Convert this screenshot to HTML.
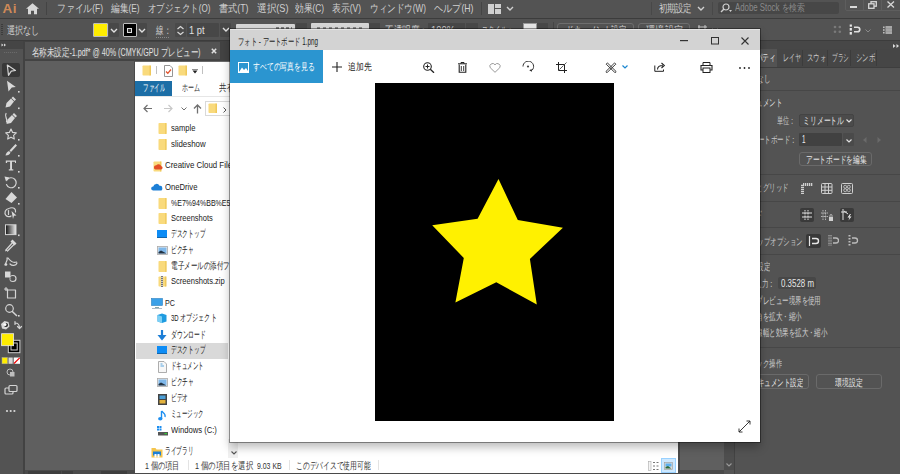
<!DOCTYPE html>
<html><head><meta charset="utf-8">
<style>
*{margin:0;padding:0;box-sizing:border-box}
html,body{width:900px;height:474px;overflow:hidden}
body{background:#535353;font-family:"Liberation Sans",sans-serif;position:relative;color:#ddd}
.a{position:absolute}
.t{position:absolute;white-space:nowrap;line-height:1;transform-origin:0 0}
</style></head><body>
<!-- menu bar -->
<div class="a" id="menubar" style="left:0;top:0;width:900px;height:18px;background:#535353">
  <div class="t" style="left:2.5px;top:1.6px;font-size:13.5px;font-weight:bold;color:#cf8a58;letter-spacing:0.6px">Ai</div>
  <svg class="a" style="left:26px;top:3px" width="13" height="11.5" viewBox="0 0 13 11"><path d="M6.5 0 L13 5.5 L11 5.5 L11 11 L8 11 L8 7.5 L5 7.5 L5 11 L2 11 L2 5.5 L0 5.5 Z" fill="#d8d8d8"/></svg>
  <div class="a" style="left:46px;top:2px;width:1px;height:13px;background:#444"></div>
  <div class="t" style="left:57px;top:3px;font-size:10.5px;color:#d0d0d0;--w:46px">ファイル(F)</div>
  <div class="t" style="left:111px;top:3px;font-size:10.5px;color:#d0d0d0;--w:28.5px">編集(E)</div>
  <div class="t" style="left:148px;top:3px;font-size:10.5px;color:#d0d0d0;--w:62.5px">オブジェクト(O)</div>
  <div class="t" style="left:219px;top:3px;font-size:10.5px;color:#d0d0d0;--w:29.5px">書式(T)</div>
  <div class="t" style="left:257px;top:3px;font-size:10.5px;color:#d0d0d0;--w:31.5px">選択(S)</div>
  <div class="t" style="left:295px;top:3px;font-size:10.5px;color:#d0d0d0;--w:29px">効果(C)</div>
  <div class="t" style="left:332px;top:3px;font-size:10.5px;color:#d0d0d0;--w:29px">表示(V)</div>
  <div class="t" style="left:370px;top:3px;font-size:10.5px;color:#d0d0d0;--w:56px">ウィンドウ(W)</div>
  <div class="t" style="left:434px;top:3px;font-size:10.5px;color:#d0d0d0;--w:39.5px">ヘルプ(H)</div>
  <div class="a" style="left:481px;top:2px;width:1px;height:13px;background:#444"></div>
  <svg class="a" style="left:488px;top:4px" width="13" height="10"><rect x="0" y="0" width="6" height="10" fill="#d0d0d0"/><rect x="7" y="0" width="6" height="4" fill="#d0d0d0"/><rect x="7" y="5" width="6" height="5" fill="#d0d0d0"/></svg>
  <svg class="a" style="left:506px;top:6px" width="8" height="6"><path d="M1 1 L4 4 L7 1" stroke="#d0d0d0" stroke-width="1.4" fill="none"/></svg>
  <div class="a" style="left:651px;top:2px;width:1px;height:13px;background:#484848"></div>
  <div class="t" style="left:659px;top:3px;font-size:10.5px;color:#cfcfcf;letter-spacing:-0.5px;--w:32px">初期設定</div>
  <svg class="a" style="left:697px;top:6px" width="8" height="6"><path d="M1 1 L4 4 L7 1" stroke="#d0d0d0" stroke-width="1.4" fill="none"/></svg>
  <div class="a" style="left:712px;top:2px;width:1px;height:13px;background:#484848"></div>
  <div class="a" style="left:718px;top:2px;width:121px;height:12px;background:#474747;border-radius:2px"></div>
  <svg class="a" style="left:720px;top:3px" width="12" height="10"><circle cx="6" cy="4" r="3" stroke="#cfcfcf" stroke-width="1.2" fill="none"/><path d="M4 6 L1 9" stroke="#cfcfcf" stroke-width="1.4"/><path d="M9 7 L12 7 L10.5 9 Z" fill="#cfcfcf"/></svg>
  <div class="t" style="left:735px;top:3px;font-size:10px;color:#8a8a8a;--w:70px">Adobe Stock を検索</div>
  <div class="a" style="left:845px;top:-2px;width:58px;height:13px;border:1px solid #5e5e5e;border-radius:2px"></div>
  <div class="a" style="left:863px;top:0;width:1px;height:10px;background:#5e5e5e"></div>
  <div class="a" style="left:881px;top:0;width:1px;height:10px;background:#5e5e5e"></div>
  <div class="a" style="left:850px;top:6px;width:7px;height:1.5px;background:#d8d8d8"></div>
  <svg class="a" style="left:868px;top:1px" width="9" height="8"><rect x="3" y="0.7" width="5.3" height="4.5" stroke="#d8d8d8" stroke-width="1.3" fill="#535353"/><rect x="0.7" y="2.8" width="5.3" height="4.5" stroke="#d8d8d8" stroke-width="1.3" fill="#535353"/></svg>
  <svg class="a" style="left:887px;top:1px" width="8" height="7"><path d="M0.5 0.5 L7 6.5 M7 0.5 L0.5 6.5" stroke="#d8d8d8" stroke-width="1.3"/></svg>
</div>
<div class="a" style="left:0;top:18px;width:900px;height:1px;background:#3c3c3c"></div>
<!-- control bar -->
<div class="a" id="ctrl" style="left:0;top:19px;width:900px;height:21px;background:#535353">
  <div class="a" style="left:1px;top:5px;width:2px;height:12px;background:repeating-linear-gradient(#3c3c3c 0 1px,transparent 1px 2px)"></div>
  <div class="t" style="left:7px;top:6.2px;font-size:10.5px;color:#d0d0d0;--w:32.5px">選択なし</div>
  <div class="a" style="left:93px;top:4px;width:15px;height:14px;border:1px solid #bdbdbd;border-radius:1px;background:#ffed00"></div>
  <div class="a" style="left:109px;top:4px;width:10px;height:14px;background:#484848;border-radius:1px"></div>
  <svg class="a" style="left:110px;top:9px" width="8" height="6"><path d="M1 1 L4 4 L7 1" stroke="#e0e0e0" stroke-width="1.4" fill="none"/></svg>
  <div class="a" style="left:123px;top:4px;width:13.5px;height:14px;border:1px solid #bdbdbd;border-radius:1px;background:#000"></div>
  <div class="a" style="left:127px;top:9px;width:5px;height:5px;background:#ddd"></div>
  <div class="a" style="left:128px;top:10px;width:3px;height:3px;background:#333"></div>
  <div class="a" style="left:137px;top:4px;width:10px;height:14px;background:#484848;border-radius:1px"></div>
  <svg class="a" style="left:138px;top:9px" width="8" height="6"><path d="M1 1 L4 4 L7 1" stroke="#e0e0e0" stroke-width="1.4" fill="none"/></svg>
  <div class="t" style="left:156px;top:6.2px;font-size:10.5px;color:#d0d0d0;--w:15px">線：</div>
  <div class="a" style="left:156px;top:18px;width:13px;height:0;border-top:1px dotted #888"></div>
  <div class="a" style="left:175px;top:4px;width:11px;height:14px;background:#4a4a4a;border-radius:1px"></div>
  <svg class="a" style="left:176px;top:6px" width="9" height="11"><path d="M1.5 4 L4.5 1.5 L7.5 4 M1.5 7 L4.5 9.5 L7.5 7" stroke="#d8d8d8" stroke-width="1.2" fill="none"/></svg>
  <div class="a" style="left:187px;top:4px;width:32px;height:14px;background:#474747;border-radius:1px"></div>
  <div class="t" style="left:189px;top:6.2px;font-size:10.5px;color:#e0e0e0;--w:15.5px">1 pt</div>
  <div class="a" style="left:220px;top:4px;width:11px;height:14px;background:#484848;border-radius:1px"></div>
  <svg class="a" style="left:222px;top:7.5px" width="8" height="6"><path d="M1 1 L4 4 L7 1" stroke="#e0e0e0" stroke-width="1.4" fill="none"/></svg>
  <!-- partially hidden items -->
  <div class="a" style="left:235.5px;top:4.5px;width:59.5px;height:14px;background:#d6d6d6;border-radius:1px"></div>
  <div class="a" style="left:276px;top:8px;width:16px;height:3px;background:repeating-linear-gradient(90deg,#555 0 3px,transparent 3px 5px);opacity:.7"></div>
  <div class="a" style="left:295.5px;top:4px;width:11.5px;height:14px;background:#484848"></div>
  <div class="a" style="left:311px;top:4px;width:58px;height:14px;background:#d6d6d6;border-radius:1px"></div>
  <div class="a" style="left:317px;top:8px;width:46px;height:3px;background:repeating-linear-gradient(90deg,#555 0 3px,transparent 3px 6px);opacity:.6"></div>
  <div class="a" style="left:369px;top:4px;width:11px;height:14px;background:#484848"></div>
  <div class="t" style="left:385px;top:6.2px;font-size:10.5px;color:#d0d0d0;--w:43px">不透明度：</div>
  <div class="a" style="left:428px;top:4px;width:37px;height:14px;background:#474747"></div>
  <div class="t" style="left:431px;top:6.2px;font-size:10.5px;color:#c8c8c8;--w:24px">100%</div>
  <div class="a" style="left:466px;top:4px;width:12px;height:14px;background:#484848"></div>
  <div class="t" style="left:482px;top:6.2px;font-size:10.5px;color:#d0d0d0;--w:31px">スタイル：</div>
  <div class="a" style="left:523px;top:4px;width:14px;height:14px;background:#e6e6e6;border:1px solid #999"></div>
  <div class="a" style="left:537px;top:4px;width:11px;height:14px;background:#484848"></div>
  <div class="a" style="left:553px;top:3px;width:1px;height:15px;background:#454545"></div>
  <div class="a" style="left:557px;top:4px;width:77px;height:15px;border:1px solid #6e6e6e;border-radius:3px"></div>
  <div class="t" style="left:566px;top:6.2px;font-size:10.5px;color:#d8d8d8;--w:60px">ドキュメント設定</div>
  <div class="a" style="left:638px;top:4px;width:52px;height:15px;border:1px solid #6e6e6e;border-radius:3px"></div>
  <div class="t" style="left:646px;top:6.2px;font-size:10.5px;color:#d8d8d8;--w:37px">環境設定</div>
  <svg class="a" style="left:696px;top:5px" width="13" height="11"><path d="M2 3 L11 3 M3 1 L3 9 L11 9 M9 1 L9 5" stroke="#c8c8c8" stroke-width="1" fill="none"/></svg>
  <svg class="a" style="left:712px;top:9px" width="6" height="4"><path d="M0.5 0.5 L3 3 L5.5 0.5" stroke="#aaa" stroke-width="1" fill="none"/></svg>
  <svg class="a" style="left:832px;top:5px" width="11" height="11"><g fill="#7a7a7a"><circle cx="3" cy="3" r="1.3"/><circle cx="7.8" cy="3" r="1.3"/><circle cx="3" cy="7.8" r="1.3"/><circle cx="7.8" cy="7.8" r="1.3"/></g></svg>
  <svg class="a" style="left:849px;top:5px" width="13" height="12"><g fill="#e8e8e8"><rect x="0.7" y="0.5" width="2.2" height="2.2"/><rect x="0.7" y="4" width="2.2" height="2.6"/><rect x="0.7" y="8" width="2.2" height="2.6"/></g><path d="M5 3.2 H8.5 a2.3 2.3 0 0 1 0 4.6 H5" stroke="#e0e0e0" stroke-width="1.6" fill="none"/></svg>
  <svg class="a" style="left:865px;top:9.5px" width="6" height="4"><path d="M0.5 0.5 L3 3 L5.5 0.5" stroke="#8a8a8a" stroke-width="1" fill="none"/></svg>
  <svg class="a" style="left:883px;top:7px" width="9" height="8"><g fill="#bdbdbd"><rect x="0" y="0.5" width="1.6" height="1.6"/><rect x="0" y="3.2" width="1.6" height="1.6"/><rect x="0" y="5.9" width="1.6" height="1.6"/><rect x="2.5" y="0" width="6.5" height="8" fill="#a8a8a8"/></g><path d="M2.5 2.6 H9 M2.5 5.3 H9" stroke="#8e8e8e" stroke-width="0.6"/></svg>
</div>
<div class="a" style="left:0;top:40px;width:900px;height:1px;background:#3c3c3c"></div>
<!-- left toolbar -->
<div class="a" style="left:0;top:41px;width:23px;height:433px;background:#535353"></div>
<div class="a" style="left:23px;top:41px;width:2px;height:433px;background:#424242"></div>
<div class="a" style="left:0;top:41px;width:23px;height:8px;background:#454545"></div>
<svg class="a" style="left:0;top:0" width="25" height="474">
  <g fill="#d8d8d8"><path d="M1.5 43.5 L3.5 45 L1.5 46.5Z M4 43.5 L6 45 L4 46.5Z"/></g>
  <path d="M4 52.5 h13" stroke="#6a6a6a" stroke-width="1" stroke-dasharray="1.2 .8"/>
  <rect x="2" y="63" width="18" height="14" rx="2" fill="#383838"/>
  <g stroke="#d4d4d4" fill="none" stroke-width="1.2" stroke-linejoin="round" stroke-linecap="round">
    <path d="M7.3 65 L15.5 70.5 L11.3 71.2 L8.5 75.3 Z"/>
    <!-- curvature pen -->
    <path d="M6 113.5 C4 117 8 118 6.5 122"/>
    <!-- star outline -->
    <path d="M11 129 L12.6 132.4 L16.3 132.9 L13.6 135.4 L14.3 139 L11 137.2 L7.7 139 L8.4 135.4 L5.7 132.9 L9.4 132.4 Z"/>
    <!-- rotate -->
    <path d="M7 180 A5 5 0 1 1 6.5 184.5"/>
    <!-- shape builder -->
    <path d="M10 208 C14 207 16 209 15.5 212 M9 208.5 C5 209 4 213 6 215.5 C7.5 217 10 217 11 216"/>
    <path d="M8.5 210.5 v4"/>
    <!-- eyedropper -->
    <path d="M6 250 L13 242 M7.5 251 L15 243.5"/>
    <!-- blend -->
    <path d="M5 265 C6 262 8 260 7 258 M8 258 C11 262 14 263 16.5 262 M10 264 C12 266 16 266 17 263"/>
    <!-- symbol sprayer circle -->
    <circle cx="13" cy="278.5" r="3"/>
    <!-- artboard -->
    <path d="M6 287.5 v3 M4.5 289 h3 M7.5 290 h8 v8 h-8 Z"/>
    <!-- zoom -->
    <circle cx="9.5" cy="308.5" r="3.8"/>
    <path d="M12.3 311.5 L16.5 315.5" stroke-width="1.6"/>
    <!-- swap -->
    <path d="M15 323 C18 323 19.5 325 19.5 328 M17.5 326.5 L19.5 328.5 L21.5 326.5 M15 321.5 v3"/>
    <!-- screen mode -->
    <rect x="5" y="388" width="8" height="6" rx="1"/>
    <rect x="9" y="385.5" width="8" height="6" rx="1" fill="#535353"/>
  </g>
  <g fill="#d8d8d8">
    <!-- direct selection -->
    <path d="M7 80.7 L15.8 87 L11.8 87.6 L8.5 91.6 Z"/>
    <!-- pen -->
    <path d="M13 96.5 L16 99.5 L14.5 101 L11.5 98 Z M11 98.5 L14 101.5 L10 106.5 L5.5 107.5 L6.5 103 Z"/>
    <path d="M10.5 105 C11.5 110 8 116 12 119 C8 116 11 110 10.5 105Z" opacity="0"/>
    <!-- curvature pen body -->
    <path d="M14 113 L17 116 L15.5 117.5 L12.5 114.5 Z M12 115 L15 118 L11 123 L6.5 124 L7.5 119.5 Z"/>
    <!-- brush -->
    <path d="M15.5 144 L17 145.5 L11 152 L9.5 150.5 Z M9 151 L10.5 152.5 C10 154.5 8 155.5 5.5 155.5 C6 153.5 7 151.5 9 151 Z"/>
    <!-- T -->
    <path d="M5.8 160.5 h10.2 v2.5 h-1 v-1.3 h-3 v7.6 h1.3 v1.3 h-4.5 v-1.3 h1.3 v-7.6 h-3 v1.3 h-1.3 Z"/>
    <!-- rotate arrow head -->
    <path d="M4.5 176.5 L9.5 177.5 L6 181.5 Z"/>
    <!-- eraser -->
    <path d="M11.5 192 L17 197.5 L11.5 203 L5.5 199 Z"/>
    <!-- shape builder cursor -->
    <path d="M11.5 211 L16.5 215.5 L14 215.8 L13 219 Z"/>
    <!-- eyedropper tip/body -->
    <path d="M12.5 239.5 L16.5 243.5 L14.5 245.5 L10.5 241.5 Z M5 251.5 L6 249 L7.5 250.5 Z"/>
    <!-- blend dot -->
    <circle cx="6" cy="264.5" r="1.3"/>
    <!-- symbol sprayer square -->
    <rect x="5" y="271.5" width="5.5" height="6"/>
    <!-- default fill/stroke -->
    <path d="M4.5 321 L8.5 322 L9.5 326.5 L6 329.5 L2 328.5 L1 324 Z"/>
    <!-- dots -->
    <circle cx="7" cy="411" r="1.1"/><circle cx="10.7" cy="411" r="1.1"/><circle cx="14.4" cy="411" r="1.1"/>
    <!-- small corner dots -->
    <rect x="18" y="91" width="1.6" height="1.6"/><rect x="18" y="107.5" width="1.6" height="1.6"/>
    <rect x="18" y="139" width="1.6" height="1.6"/><rect x="18" y="155" width="1.6" height="1.6"/>
    <rect x="18" y="171" width="1.6" height="1.6"/><rect x="18" y="187" width="1.6" height="1.6"/>
    <rect x="18" y="203" width="1.6" height="1.6"/><rect x="18" y="234.5" width="1.6" height="1.6"/>
    <rect x="18" y="315" width="1.6" height="1.6"/>
  </g>
  <g fill="#3a3a3a">
    <circle cx="12" cy="278.5" r="2" fill="none" stroke="#535353" stroke-width="0.6"/>
    <path d="M4 325 a2 2 0 1 0 4 0 a2 2 0 1 0 -4 0" fill="#222"/>
  </g>
  <circle cx="5" cy="324.5" r="1.5" fill="#fff"/>
  <!-- gradient square -->
  <defs><linearGradient id="tg" x1="0" x2="1"><stop offset="0" stop-color="#111"/><stop offset="1" stop-color="#eee"/></linearGradient></defs>
  <rect x="5.5" y="224.8" width="10.5" height="9.8" fill="url(#tg)" stroke="#d4d4d4" stroke-width="1"/>
  <!-- stroke swatch -->
  <rect x="8.3" y="340.3" width="11.6" height="12.4" fill="#000" stroke="#d0d0d0" stroke-width="1"/>
  <rect x="11" y="343" width="6.2" height="7" fill="none" stroke="#d0d0d0" stroke-width="1"/>
  <!-- fill swatch -->
  <rect x="1.6" y="333.7" width="12" height="12" fill="#ffed00" stroke="#e8e8e8" stroke-width="0.8"/>
  <!-- color/gradient/none -->
  <rect x="2" y="357.5" width="5.5" height="6.3" fill="#ffed00" stroke="#aaa" stroke-width="0.5"/>
  <rect x="8.5" y="357.5" width="4.2" height="6.3" fill="#d8d8d8"/>
  <rect x="13.7" y="357.5" width="6.3" height="6.3" fill="#fff"/>
  <path d="M14 363.5 L19.7 357.8" stroke="#e00" stroke-width="1.2"/>
  <!-- draw mode -->
  <circle cx="10" cy="372" r="3" fill="none" stroke="#bdbdbd" stroke-width="1"/>
  <rect x="10" y="372" width="4.5" height="4.5" fill="#bdbdbd"/>
</svg>
<!-- tab bar -->
<div class="a" style="left:25px;top:41px;width:710px;height:20px;background:#434343"></div>
<div class="a" style="left:25px;top:42px;width:195px;height:17px;background:#535353">
  <div class="t" style="left:7px;top:5px;font-size:10.5px;color:#e2e2e2;--w:168.5px">名称未設定-1.pdf* @ 40% (CMYK/GPU プレビュー)</div>
  <svg class="a" style="left:186px;top:5.5px" width="6" height="6"><path d="M0.8 0.8 L5.2 5.2 M5.2 0.8 L0.8 5.2" stroke="#e0e0e0" stroke-width="1.5"/></svg>
</div>
<!-- canvas -->
<div class="a" style="left:25px;top:61px;width:699px;height:413px;background:#5f5f5f"></div>
<!-- status bar -->
<div class="a" style="left:25px;top:470px;width:699px;height:4px;background:#4a4a4a"></div>
<div class="a" style="left:723.5px;top:470px;width:10.5px;height:4px;background:#555"></div>
<div class="a" style="left:28px;top:471px;width:33px;height:3px;background:#3e3e3e"></div>
<div class="a" style="left:62px;top:471px;width:11px;height:3px;background:#3e3e3e"></div>
<div class="a" style="left:101px;top:471px;width:26px;height:3px;background:#3e3e3e"></div>
<!-- scrollbar -->
<div class="a" style="left:723.5px;top:61px;width:10.5px;height:409px;background:#4e4e4e"></div>
<div class="a" style="left:734px;top:41px;width:1.5px;height:433px;background:#434343"></div>
<svg class="a" style="left:726px;top:462.5px" width="6" height="4"><path d="M0.5 0.5 L3 3 L5.5 0.5" stroke="#9a9a9a" stroke-width="1.1" fill="none"/></svg>
<!-- right panel -->
<div class="a" id="panel" style="left:735px;top:41px;width:165px;height:433px;background:#535353;overflow:hidden">
<div class="a" style="left:0.0px;top:0.0px;width:165.0px;height:7.5px;background:#474747"></div>
<svg class="a" style="left:157.5px;top:2.5px" width="7" height="4" viewBox="0 0 7 4"><path d="M0 0 L2.5 2 L0 4Z M3.5 0 L6 2 L3.5 4Z" fill="#ddd"/></svg>
<div class="a" style="left:0.0px;top:7.5px;width:165.0px;height:18.5px;background:#464646"></div>
<div class="a" style="left:0.0px;top:7.5px;width:42.0px;height:18.5px;background:#535353"></div>
<div class="t" style="left:7.0px;top:12.3px;font-size:10px;color:#e6e6e6;--w:34.0px">プロパティ</div>
<div class="a" style="left:67.0px;top:9.0px;width:0.8px;height:16.0px;background:#3c3c3c"></div>
<div class="a" style="left:92.0px;top:9.0px;width:0.8px;height:16.0px;background:#3c3c3c"></div>
<div class="a" style="left:114.5px;top:9.0px;width:0.8px;height:16.0px;background:#3c3c3c"></div>
<div class="a" style="left:141.0px;top:9.0px;width:0.8px;height:16.0px;background:#3c3c3c"></div>
<div class="t" style="left:48.2px;top:12.3px;font-size:10px;color:#c8c8c8;--w:17.8px">レイヤ</div>
<div class="t" style="left:71.6px;top:12.3px;font-size:10px;color:#c8c8c8;--w:19.4px">スウォ</div>
<div class="t" style="left:96.6px;top:12.3px;font-size:10px;color:#c8c8c8;--w:17px">ブラシ</div>
<div class="t" style="left:120.8px;top:12.3px;font-size:10px;color:#c8c8c8;--w:19.2px">シンボ</div>
<div class="a" style="left:0.0px;top:25.5px;width:165.0px;height:1.0px;background:#3e3e3e"></div>
<div class="t" style="left:8.5px;top:33.3px;font-size:10px;color:#d6d6d6;--w:26.0px">選択なし</div>
<div class="a" style="left:0.0px;top:48.5px;width:165.0px;height:1.0px;background:#474747"></div>
<div class="t" style="left:8.4px;top:56.8px;font-size:10px;color:#dedede;--w:39.0px">ドキュメント</div>
<div class="t" style="left:41.8px;top:75.4px;font-size:10px;color:#c8c8c8;--w:18.5px">単位：</div>
<div class="a" style="left:64.3px;top:72.9px;width:54.7px;height:12.9px;background:#4b4b4b;border:1px solid #444;border-radius:2px"></div>
<div class="t" style="left:68.4px;top:74.8px;font-size:10px;color:#e6e6e6;--w:41px">ミリメートル</div>
<svg class="a" style="left:110.5px;top:77.5px" width="6" height="4" viewBox="0 0 6 4"><path d="M0.5 0.5 L3 3 L5.5 0.5" stroke="#e0e0e0" stroke-width="1.2" fill="none"/></svg>
<div class="t" style="left:15.5px;top:93.9px;font-size:10px;color:#c8c8c8;--w:45.5px">アートボード：</div>
<div class="a" style="left:64.3px;top:92.2px;width:42.7px;height:12.9px;background:#414141;border-radius:1px"></div>
<div class="t" style="left:67.0px;top:93.9px;font-size:10px;color:#f0f0f0;--w:3.5px">1</div>
<div class="a" style="left:107.8px;top:92.2px;width:11.2px;height:12.9px;background:#4a4a4a;border-radius:1px"></div>
<svg class="a" style="left:110.5px;top:97.5px" width="6" height="4" viewBox="0 0 6 4"><path d="M0.5 0.5 L3 3 L5.5 0.5" stroke="#e0e0e0" stroke-width="1.2" fill="none"/></svg>
<svg class="a" style="left:127.8px;top:96.0px" width="4" height="6" viewBox="0 0 4 6"><path d="M3.5 0 L0 3 L3.5 6Z" fill="#6a6a6a"/></svg>
<svg class="a" style="left:141.8px;top:96.0px" width="4" height="6" viewBox="0 0 4 6"><path d="M0.5 0 L4 3 L0.5 6Z" fill="#6a6a6a"/></svg>
<div class="a" style="left:64.3px;top:110.7px;width:72.5px;height:14.3px;border:1px solid #6a6a6a;border-radius:3px"></div>
<div class="t" style="left:70.8px;top:114.1px;font-size:10px;color:#e6e6e6;--w:60.4px">アートボードを編集</div>
<div class="a" style="left:0.0px;top:133.0px;width:165.0px;height:1.0px;background:#474747"></div>
<div class="t" style="left:-4.7px;top:142.4px;font-size:10px;color:#c8c8c8;--w:58.5px">ルーラーとグリッド</div>
<svg class="a" style="left:66.0px;top:142.0px" width="12" height="11" viewBox="0 0 12 11"><path d="M1.5 11 V1.5 H12" stroke="#d0d0d0" stroke-width="3" fill="none" stroke-dasharray="1.3 0.7"/></svg>
<svg class="a" style="left:86.0px;top:142.0px" width="11.5" height="11" viewBox="0 0 11.5 11"><rect x="0.5" y="0.5" width="10.5" height="10" rx="1" fill="none" stroke="#cfcfcf" stroke-width="1"/><path d="M4 1 V10.5 M7.5 1 V10.5 M1 4 H11 M1 7.3 H11" stroke="#cfcfcf" stroke-width="1"/></svg>
<svg class="a" style="left:105.5px;top:142.0px" width="12" height="11" viewBox="0 0 12 11"><rect x="0.5" y="0.5" width="11" height="10" rx="1" fill="none" stroke="#cfcfcf" stroke-width="1"/><circle cx="4.2" cy="3.8" r="1.5" fill="none" stroke="#cfcfcf" stroke-width="0.8"/><circle cx="7.8" cy="3.8" r="1.5" fill="none" stroke="#cfcfcf" stroke-width="0.8"/><circle cx="4.2" cy="7.2" r="1.5" fill="none" stroke="#cfcfcf" stroke-width="0.8"/><circle cx="7.8" cy="7.2" r="1.5" fill="none" stroke="#cfcfcf" stroke-width="0.8"/></svg>
<div class="a" style="left:0.0px;top:159.5px;width:165.0px;height:1.0px;background:#474747"></div>
<div class="t" style="left:7.5px;top:169.0px;font-size:10px;color:#c8c8c8;--w:19.5px">ガイド</div>
<div class="a" style="left:65.0px;top:166.5px;width:14.0px;height:14.5px;background:#3a3a3a;border-radius:2px"></div>
<svg class="a" style="left:67.0px;top:168.5px" width="10" height="10" viewBox="0 0 10 10"><path d="M3 0 V10 M6 0 V10" stroke="#e0e0e0" stroke-width="1" stroke-dasharray="1 0.5"/><path d="M0 3 H10 M0 7 H10" stroke="#e0e0e0" stroke-width="1.2"/></svg>
<svg class="a" style="left:86.0px;top:168.5px" width="12" height="12" viewBox="0 0 12 12"><path d="M2 0 V10 M4.5 0 V10 M0 3 H7 M0 6.5 H7" stroke="#bdbdbd" stroke-width="0.9" stroke-dasharray="1 0.5"/><rect x="8" y="7" width="4" height="4" fill="#d0d0d0"/><path d="M9 7 V5.5 a1 1 0 0 1 2 0 V7" stroke="#d0d0d0" fill="none" stroke-width="0.8"/></svg>
<div class="a" style="left:104.6px;top:166.5px;width:14.0px;height:14.5px;background:#3a3a3a;border-radius:2px"></div>
<svg class="a" style="left:106.0px;top:168.0px" width="12" height="12" viewBox="0 0 12 12"><path d="M2 0 V11 M0 3 H6" stroke="#e0e0e0" stroke-width="1"/><path d="M3 2 L7 5" stroke="#e0e0e0" stroke-width="1"/><path d="M9 5 L6.5 8.5 H8.5 L7.5 11.5 L10.5 7.5 H8.5 L10 5Z" fill="#f0f0f0"/></svg>
<div class="a" style="left:0.0px;top:186.2px;width:165.0px;height:1.0px;background:#474747"></div>
<div class="t" style="left:9.0px;top:196.0px;font-size:10px;color:#c8c8c8;--w:58.5px">スナップオプション</div>
<div class="a" style="left:71.2px;top:193.1px;width:14.5px;height:14.0px;background:#383838;border-radius:2px"></div>
<svg class="a" style="left:73.0px;top:195.0px" width="12" height="10" viewBox="0 0 12 10"><path d="M1.5 0 V10" stroke="#e6e6e6" stroke-width="1.2"/><path d="M4 2.5 H8 a2.5 2.5 0 0 1 0 5 H4" stroke="#e6e6e6" stroke-width="1.4" fill="none"/></svg>
<svg class="a" style="left:93.3px;top:194.0px" width="11" height="11" viewBox="0 0 11 11"><path d="M1 0 V11 M3 0 V11" stroke="#bdbdbd" stroke-width="1" stroke-dasharray="1 0.6"/><path d="M5 3 H8 a2.5 2.5 0 0 1 0 5 H5" stroke="#bdbdbd" stroke-width="1.3" fill="none"/></svg>
<svg class="a" style="left:113.1px;top:194.0px" width="11" height="11" viewBox="0 0 11 11"><path d="M1.5 0 V11" stroke="#bdbdbd" stroke-width="2" stroke-dasharray="1.5 1.5"/><path d="M4 3 H7 a2.5 2.5 0 0 1 0 5 H4" stroke="#bdbdbd" stroke-width="1.3" fill="none"/></svg>
<div class="a" style="left:0.0px;top:212.5px;width:165.0px;height:1.0px;background:#474747"></div>
<div class="t" style="left:8.5px;top:221.0px;font-size:10px;color:#c8c8c8;--w:26.0px">環境設定</div>
<div class="t" style="left:6.8px;top:237.9px;font-size:10px;color:#c8c8c8;--w:32.5px">キー入力：</div>
<div class="a" style="left:42.6px;top:236.2px;width:38.4px;height:12.1px;background:#474747;border-radius:2px"></div>
<div class="t" style="left:45.8px;top:237.7px;font-size:10px;color:#e6e6e6;--w:33px">0.3528 m</div>
<div class="t" style="left:21.1px;top:254.8px;font-size:10px;color:#d0d0d0;--w:65.0px">プレビュー境界を使用</div>
<div class="t" style="left:20.5px;top:270.9px;font-size:10px;color:#d0d0d0;--w:45.5px">角を拡大・縮小</div>
<div class="t" style="left:21.1px;top:287.0px;font-size:10px;color:#d0d0d0;--w:71.5px">線幅と効果を拡大・縮小</div>
<div class="a" style="left:0.0px;top:306.0px;width:165.0px;height:1.0px;background:#474747"></div>
<div class="t" style="left:8.4px;top:318.0px;font-size:10px;color:#c8c8c8;--w:39.0px">クイック操作</div>
<div class="a" style="left:7.0px;top:333.2px;width:67.0px;height:14.5px;border:1px solid #6a6a6a;border-radius:3px"></div>
<div class="t" style="left:15.5px;top:336.5px;font-size:10px;color:#e6e6e6;--w:52.0px">ドキュメント設定</div>
<div class="a" style="left:80.5px;top:333.2px;width:66.5px;height:14.5px;border:1px solid #6a6a6a;border-radius:3px"></div>
<div class="t" style="left:99.8px;top:336.5px;font-size:10px;color:#e6e6e6;--w:27.4px">環境設定</div>
</div>

<!-- explorer -->
<div class="a" id="explorer" style="left:135px;top:61px;width:544px;height:412px;background:#fff;overflow:hidden">
<div class="a" style="left:0;top:0;width:544px;height:1px;background:#6a6a6a"></div>
<svg class="a" style="left:6.599999999999994px;top:3.5999999999999943px" width="10" height="12"><rect x="0.5" y="0.5" width="8.0" height="10.0" rx="0.8" fill="#f9da7c"/><rect x="7.5" y="0.5" width="1.5" height="10.0" fill="#efc85a"/></svg>
<div class="a" style="left:21px;top:5px;width:1px;height:8px;background:#c0c0c0"></div>
<svg class="a" style="left:29px;top:4px" width="9" height="12"><path d="M0.5 0.5 h5.5 l2.5 2.5 v8.5 h-8 Z" fill="#fff" stroke="#8a8a8a" stroke-width="0.9"/><path d="M2 6.5 L3.8 8.3 L7 4.5" stroke="#e2522b" stroke-width="1.3" fill="none"/></svg>
<svg class="a" style="left:42.900000000000006px;top:4px" width="10" height="12"><rect x="0.5" y="0.5" width="8.0" height="10.0" rx="0.8" fill="#f9da7c"/><rect x="7.5" y="0.5" width="1.5" height="10.0" fill="#efc85a"/></svg>
<svg class="a" style="left:56.5px;top:8px" width="6" height="5"><path d="M0 0 h6" stroke="#222" stroke-width="1"/><path d="M0.5 1.5 h5 l-2.5 3 Z" fill="#222"/></svg>
<div class="a" style="left:67px;top:5px;width:1px;height:8px;background:#c0c0c0"></div>
<div class="a" style="left:0;top:19.7px;width:37px;height:15px;background:#1c6ea6"></div>
<div class="a" style="left:0;top:35px;width:544px;height:1px;background:#e6e6e6"></div>
<svg class="a" style="left:8px;top:43px" width="10" height="9"><path d="M9 4.5 H1 M4.5 1 L1 4.5 L4.5 8" stroke="#707070" stroke-width="1.2" fill="none"/></svg>
<svg class="a" style="left:28px;top:43px" width="10" height="9"><path d="M1 4.5 H9 M5.5 1 L9 4.5 L5.5 8" stroke="#c8c8c8" stroke-width="1.2" fill="none"/></svg>
<svg class="a" style="left:46px;top:46px" width="6" height="4"><path d="M0.5 0.5 L3 3 L5.5 0.5" stroke="#707070" stroke-width="1" fill="none"/></svg>
<svg class="a" style="left:57.5px;top:43px" width="9" height="10"><path d="M4.5 9.5 V1 M1 4.5 L4.5 1 L8 4.5" stroke="#707070" stroke-width="1.3" fill="none"/></svg>
<div class="a" style="left:70px;top:40px;width:120px;height:15px;border:1px solid #d9d9d9;background:#fff"></div>
<svg class="a" style="left:73.4px;top:41.5px" width="10" height="11.5"><rect x="0.5" y="0.5" width="8.0" height="9.5" rx="0.8" fill="#f9da7c"/><rect x="7.5" y="0.5" width="1.5" height="9.5" fill="#efc85a"/></svg>
<svg class="a" style="left:87.5px;top:46px" width="4" height="6"><path d="M0.5 0.5 L3 3 L0.5 5.5" stroke="#555" stroke-width="1" fill="none"/></svg>
<div class="a" style="left:1.3px;top:282.3px;width:92px;height:15.7px;background:#d9d9d9"></div>
<svg class="a" style="left:23px;top:62.2px" width="9.5" height="12.5"><rect x="0.5" y="0" width="8" height="11" rx="0.8" fill="#f9da7c"/><rect x="7.0" y="0" width="1.5" height="11" fill="#f0cc62"/></svg>
<svg class="a" style="left:23px;top:77.89999999999998px" width="9.5" height="12.5"><rect x="0.5" y="0" width="8" height="11" rx="0.8" fill="#f9da7c"/><rect x="7.0" y="0" width="1.5" height="11" fill="#f0cc62"/></svg>
<svg class="a" style="left:23px;top:136.7px" width="9.5" height="12.5"><rect x="0.5" y="0" width="8" height="11" rx="0.8" fill="#f9da7c"/><rect x="7.0" y="0" width="1.5" height="11" fill="#f0cc62"/></svg>
<svg class="a" style="left:23px;top:151.89999999999998px" width="9.5" height="12.5"><rect x="0.5" y="0" width="8" height="11" rx="0.8" fill="#f9da7c"/><rect x="7.0" y="0" width="1.5" height="11" fill="#f0cc62"/></svg>
<svg class="a" style="left:23px;top:200.0px" width="9.5" height="12.5"><rect x="0.5" y="0" width="8" height="11" rx="0.8" fill="#f9da7c"/><rect x="7.0" y="0" width="1.5" height="11" fill="#f0cc62"/></svg>
<svg class="a" style="left:17.5px;top:99.5px" width="9.5" height="12"><rect x="0.5" y="0.5" width="7.5" height="10.0" rx="0.8" fill="#f9da7c"/><rect x="7.0" y="0.5" width="1.5" height="10.0" fill="#efc85a"/></svg>
<svg class="a" style="left:19px;top:102.5px" width="9" height="6"><path d="M1.5 5.5 a2.2 2.2 0 0 1 0.8 -4.3 a3 3 0 0 1 5 1 a1.7 1.7 0 0 1 0 3.3 Z" fill="#e34f26"/></svg>
<svg class="a" style="left:16px;top:122px" width="12" height="8"><path d="M2 7.5 a2 2 0 0 1 0.3 -4 a3.3 3.3 0 0 1 6.2 -0.8 a2.4 2.4 0 0 1 2.8 2.4 a2.2 2.2 0 0 1 -0.8 2.4 Z" fill="#1c7fd6"/></svg>
<div class="a" style="left:22px;top:169.1px;width:10px;height:8px;background:#0d8cf5;border-bottom:1px solid #1565a8"></div>
<div class="a" style="left:22px;top:284.9px;width:10px;height:8px;background:#0d8cf5;border-bottom:1px solid #1565a8"></div>
<svg class="a" style="left:21.5px;top:185.1px" width="11" height="9"><rect x="0.5" y="0.5" width="10" height="8" fill="#eee" stroke="#aaa" stroke-width="0.8"/><rect x="1.5" y="1.5" width="8" height="6" fill="#7fb8ea"/><path d="M1.5 6 L4 4.5 L9.5 7.5 H1.5 Z" fill="#234"/></svg>
<svg class="a" style="left:21.5px;top:317.1px" width="11" height="9"><rect x="0.5" y="0.5" width="10" height="8" fill="#eee" stroke="#aaa" stroke-width="0.8"/><rect x="1.5" y="1.5" width="8" height="6" fill="#7fb8ea"/><path d="M1.5 6 L4 4.5 L9.5 7.5 H1.5 Z" fill="#234"/></svg>
<svg class="a" style="left:23px;top:215px" width="9.5" height="12"><rect x="0.5" y="0.5" width="7.5" height="10.0" rx="0.8" fill="#f9da7c"/><rect x="7.0" y="0.5" width="1.5" height="10.0" fill="#efc85a"/></svg>
<div class="a" style="left:26px;top:215px;width:2px;height:11px;background:repeating-linear-gradient(#777 0 1px,#ccc 1px 2px)"></div>
<svg class="a" style="left:16px;top:237px" width="12" height="11"><rect x="0.5" y="0.5" width="11" height="7" fill="#3aa0e8" stroke="#2a7fc0" stroke-width="0.6"/><path d="M4 9.5 h4" stroke="#8aa" stroke-width="1"/><path d="M1 10.5 h10" stroke="#9ab" stroke-width="0.8"/></svg>
<svg class="a" style="left:22px;top:252px" width="10" height="10"><path d="M0.5 2 L5 0.5 L9.5 2 V8.5 L5 10 L0.5 8.5 Z" fill="#1e9be0"/><path d="M0.5 2 L5 3.5 V10 L0.5 8.5 Z" fill="#7dd0f5"/></svg>
<svg class="a" style="left:22px;top:268.5px" width="10" height="11"><path d="M5 0 V9" stroke="#1c7ed6" stroke-width="2.2"/><path d="M0.5 5 L5 10.5 L9.5 5 Z" fill="#1c7ed6"/></svg>
<svg class="a" style="left:22.5px;top:300px" width="9" height="12"><path d="M0.5 0.5 h5.5 l2.5 2.5 v8.5 h-8 Z" fill="#f7f7f7" stroke="#999" stroke-width="0.8"/><path d="M2.5 3 h2 M2.5 5 h3.5" stroke="#5aa7e0" stroke-width="1"/></svg>
<svg class="a" style="left:23px;top:333px" width="9" height="11"><rect x="0" y="0" width="9" height="11" fill="#444"/><rect x="1.5" y="1.5" width="6" height="3.5" fill="#4b9fd8"/><rect x="1.5" y="6" width="6" height="3.5" fill="#e3b23c"/></svg>
<svg class="a" style="left:23px;top:348.5px" width="9" height="11"><path d="M3.5 1 V8.5" stroke="#1c8ef0" stroke-width="1.4"/><ellipse cx="2.3" cy="8.8" rx="2.2" ry="1.8" fill="#1c8ef0"/><path d="M3.5 1 C5 3 8 3.5 7 7" stroke="#1c8ef0" stroke-width="1.3" fill="none"/></svg>
<svg class="a" style="left:21.5px;top:364.5px" width="11" height="10"><rect x="0" y="0" width="2" height="2" fill="#1c8ef0"/><rect x="2.5" y="0" width="2" height="2" fill="#1c8ef0"/><rect x="0" y="2.5" width="2" height="2" fill="#1c8ef0"/><rect x="2.5" y="2.5" width="2" height="2" fill="#1c8ef0"/><rect x="1" y="6" width="10" height="3.5" fill="#555"/><rect x="7.5" y="7" width="2.5" height="1.2" fill="#3c3"/></svg>
<svg class="a" style="left:16px;top:385.5px" width="12" height="11"><path d="M0.5 1 h4 l1 1.5 h6 v8 h-11 Z" fill="#f4c44c"/><rect x="2" y="4.5" width="8" height="4" fill="#1c7fd6"/><rect x="3.5" y="7" width="2" height="3.5" fill="#fff"/><rect x="6.5" y="7" width="2" height="3.5" fill="#fff"/></svg>
<div class="a" style="left:53px;top:399px;width:1px;height:10px;background:#e3e3e3"></div>
<div class="a" style="left:154px;top:399px;width:1px;height:10px;background:#e3e3e3"></div>
<div class="a" style="left:242.5px;top:399px;width:1px;height:10px;background:#e3e3e3"></div>
<div class="a" style="left:93px;top:378px;width:10px;height:19px;background:#f0f0f0"></div>
<svg class="a" style="left:95.5px;top:389.5px" width="6" height="4"><path d="M0.5 0.5 L3 3 L5.5 0.5" stroke="#555" stroke-width="1.1" fill="none"/></svg>
<svg class="a" style="left:513px;top:399.5px" width="12" height="10"><rect x="0.5" y="0.5" width="2.5" height="9" fill="#f4f4f4" stroke="#aaa" stroke-width="0.6"/><path d="M5 1.5 h2 M8.5 1.5 h2 M5 5 h2 M8.5 5 h2 M5 8.5 h2 M8.5 8.5 h2" stroke="#777" stroke-width="1"/></svg>
<div class="a" style="left:526px;top:397px;width:15px;height:15px;background:#cce8ff;border:1px solid #99d1ff"></div>
<svg class="a" style="left:529px;top:400.5px" width="9" height="8"><rect x="0.5" y="0.5" width="8" height="7" fill="#ddd" stroke="#999" stroke-width="0.6"/><rect x="1.5" y="1.5" width="6" height="3" fill="#5ab0f0"/><path d="M1.5 5 L4 4 L7.5 6.5 H1.5Z" fill="#2a6a3a"/></svg>
<div class="t" style="left:8px;top:22.0px;font-size:10px;color:#ffffff;--w:22px">ファイル</div>
<div class="t" style="left:47px;top:22.0px;font-size:10px;color:#333;--w:18px">ホーム</div>
<div class="t" style="left:83.80000000000001px;top:22.0px;font-size:10px;color:#333;--w:15px">共有</div>
<div class="t" style="left:35.69999999999999px;top:62.1px;font-size:9.8px;color:#1a1a1a;--w:24.4px">sample</div>
<div class="t" style="left:35.599999999999994px;top:77.8px;font-size:9.8px;color:#1a1a1a;--w:34.7px">slideshow</div>
<div class="t" style="left:30px;top:99.4px;font-size:9.8px;color:#1a1a1a;--w:71px">Creative Cloud Files</div>
<div class="t" style="left:30px;top:120.6px;font-size:9.8px;color:#1a1a1a;--w:32.4px">OneDrive</div>
<div class="t" style="left:35.599999999999994px;top:136.6px;font-size:9.8px;color:#1a1a1a;--w:88px">%E7%94%BB%E5%83%8F</div>
<div class="t" style="left:35.599999999999994px;top:151.8px;font-size:9.8px;color:#1a1a1a;--w:41.8px">Screenshots</div>
<div class="t" style="left:35.599999999999994px;top:168.2px;font-size:9.8px;color:#1a1a1a;--w:34.2px">デスクトップ</div>
<div class="t" style="left:35.599999999999994px;top:184.2px;font-size:9.8px;color:#1a1a1a;--w:22.8px">ピクチャ</div>
<div class="t" style="left:35.599999999999994px;top:199.9px;font-size:9.8px;color:#1a1a1a;--w:78px">電子メールの添付ファイル</div>
<div class="t" style="left:35.599999999999994px;top:215.1px;font-size:9.8px;color:#1a1a1a;--w:53.7px">Screenshots.zip</div>
<div class="t" style="left:30px;top:236.9px;font-size:9.8px;color:#1a1a1a;--w:9.9px">PC</div>
<div class="t" style="left:35.599999999999994px;top:252.3px;font-size:9.8px;color:#1a1a1a;--w:45.6px">3D オブジェクト</div>
<div class="t" style="left:35.599999999999994px;top:268.6px;font-size:9.8px;color:#1a1a1a;--w:34.9px">ダウンロード</div>
<div class="t" style="left:35.599999999999994px;top:284.0px;font-size:9.8px;color:#1a1a1a;--w:34.2px">デスクトップ</div>
<div class="t" style="left:35.599999999999994px;top:300.2px;font-size:9.8px;color:#1a1a1a;--w:32.9px">ドキュメント</div>
<div class="t" style="left:35.599999999999994px;top:316.2px;font-size:9.8px;color:#1a1a1a;--w:22.8px">ピクチャ</div>
<div class="t" style="left:35.599999999999994px;top:332.2px;font-size:9.8px;color:#1a1a1a;--w:17.2px">ビデオ</div>
<div class="t" style="left:35.599999999999994px;top:348.1px;font-size:9.8px;color:#1a1a1a;--w:32.7px">ミュージック</div>
<div class="t" style="left:35.80000000000001px;top:364.3px;font-size:9.8px;color:#1a1a1a;--w:45.9px">Windows (C:)</div>
<div class="t" style="left:30px;top:385.3px;font-size:9.8px;color:#1a1a1a;--w:28.3px">ライブラリ</div>
<div class="t" style="left:10.300000000000011px;top:399.9px;font-size:9.8px;color:#333;--w:34.7px">1 個の項目</div>
<div class="t" style="left:60.30000000000001px;top:399.9px;font-size:9.8px;color:#333;--w:58px">1 個の項目を選択</div>
<div class="t" style="left:122.19999999999999px;top:399.9px;font-size:9.8px;color:#333;--w:24.6px">9.03 KB</div>
<div class="t" style="left:161.2px;top:399.9px;font-size:9.8px;color:#333;--w:74.5px">このデバイスで使用可能</div>
</div>
<div class="a" style="left:133.5px;top:60px;width:1.5px;height:414px;background:#4a4a4a"></div>
<div class="a" style="left:678px;top:60px;width:1.5px;height:414px;background:#4a4a4a"></div>
<div class="a" style="left:133.5px;top:473px;width:546px;height:1px;background:#4a4a4a"></div>

<!-- photos window -->
<div class="a" id="photos" style="left:230px;top:29px;width:530px;height:413px;background:#fff;box-shadow:0 0 0 1px rgba(0,0,0,.38),0 5px 9px rgba(0,0,0,.28)">
<div class="a" style="left:0;top:0;width:530px;height:21.3px;background:#d3d3d3;border-top:1px solid #e4e4e4"></div>
<div class="t" style="left:7.8px;top:8.0px;font-size:10px;color:#222;--w:80px">フォト - アートボード 1.png</div>
<svg class="a" style="left:450.0px;top:11.0px" width="8" height="1.5" viewBox="0 0 8 1.5"><rect width="8" height="1.2" fill="#333"/></svg>
<svg class="a" style="left:480.5px;top:8.0px" width="8" height="7.5" viewBox="0 0 8 7.5"><rect x="0.5" y="0.5" width="7" height="6.5" fill="none" stroke="#333" stroke-width="1"/></svg>
<svg class="a" style="left:511.0px;top:7.5px" width="8" height="8" viewBox="0 0 8 8"><path d="M0.5 0.5 L7.5 7.5 M7.5 0.5 L0.5 7.5" stroke="#333" stroke-width="1.1"/></svg>
<div class="a" style="left:0;top:21px;width:93px;height:33px;background:#2b95d0"></div>
<svg class="a" style="left:7.8px;top:32.5px" width="11" height="11" viewBox="0 0 11 11"><rect x="0.5" y="0.5" width="10" height="10" fill="none" stroke="#fff" stroke-width="1"/><path d="M1 10 L4 5.5 L6 8 L8 6 L10 9 V10 Z" fill="#fff"/></svg>
<div class="t" style="left:23.3px;top:33.3px;font-size:10px;color:#ffffff;--w:61.7px">すべての写真を見る</div>
<svg class="a" style="left:102.0px;top:32.5px" width="10" height="10" viewBox="0 0 10 10"><path d="M5 0 V10 M0 5 H10" stroke="#222" stroke-width="1.1"/></svg>
<div class="t" style="left:117.8px;top:33.3px;font-size:10px;color:#222;--w:23.3px">追加先</div>
<svg class="a" style="left:193.0px;top:33.0px" width="12" height="11" viewBox="0 0 12 11"><circle cx="4.5" cy="4.5" r="3.8" fill="none" stroke="#222" stroke-width="1.1"/><path d="M4.5 2.5 V6.5 M2.5 4.5 H6.5" stroke="#222" stroke-width="1"/><path d="M7.3 7.3 L11 10.8" stroke="#222" stroke-width="1.3"/></svg>
<svg class="a" style="left:227.5px;top:33.0px" width="9" height="11" viewBox="0 0 9 11"><path d="M0 1.8 H9 M3 1.8 V0.5 H6 V1.8" stroke="#222" stroke-width="1" fill="none"/><path d="M1.2 2.5 V10.3 H7.8 V2.5" stroke="#222" stroke-width="1.1" fill="none"/><path d="M3.3 4 V9 M5.7 4 V9" stroke="#222" stroke-width="0.9"/></svg>
<svg class="a" style="left:259.0px;top:33.5px" width="12" height="10" viewBox="0 0 12 10"><path d="M6 9.3 L1.3 4.8 A2.6 2.6 0 0 1 6 1.8 A2.6 2.6 0 0 1 10.7 4.8 Z" fill="none" stroke="#9a9a9a" stroke-width="1"/></svg>
<svg class="a" style="left:291.5px;top:32px" width="13" height="13" viewBox="0 0 13 13"><path d="M1 5.5 A5.3 5.3 0 1 1 9.2 9.9" fill="none" stroke="#333" stroke-width="1"/><path d="M7.3 9.3 L9.8 10.8 L9.6 8 Z" fill="#222"/><circle cx="6" cy="5.5" r="1.1" fill="#444"/></svg>
<svg class="a" style="left:326px;top:32.5px" width="11" height="11" viewBox="0 0 11 11"><path d="M2.5 0 V8.5 H11 M0 2.5 H8.5 V11" fill="none" stroke="#222" stroke-width="1"/><path d="M3.5 7.5 L7.5 3.5 M8.5 2.5 L10.5 0.5" stroke="#333" stroke-width="0.8"/></svg>
<svg class="a" style="left:374.5px;top:32.5px" width="12" height="11" viewBox="0 0 12 11"><g fill="none" stroke="#2a2a2a" stroke-width="0.9" stroke-linejoin="round"><path d="M1.2 2.2 L2.4 0.9 L11 9.4 L10.6 10.5 L9.5 10.2 Z"/><path d="M10.8 2.2 L9.6 0.9 L1 9.4 L1.4 10.5 L2.5 10.2 Z"/></g></svg>
<svg class="a" style="left:392.0px;top:35.5px" width="6" height="4" viewBox="0 0 6 4"><path d="M0.5 0.5 L3 3 L5.5 0.5" stroke="#1a86d0" stroke-width="1.2" fill="none"/></svg>
<svg class="a" style="left:424.0px;top:32.5px" width="12" height="10" viewBox="0 0 12 10"><path d="M0.8 3.5 V9.3 H9.5 V7.5" fill="none" stroke="#222" stroke-width="1"/><path d="M3.5 7.5 C3.5 4.5 5.5 3.5 9 3.5 M7.5 1 L10.3 3.5 L7.5 6" fill="none" stroke="#222" stroke-width="1.1"/></svg>
<svg class="a" style="left:469.5px;top:32.5px" width="13" height="11" viewBox="0 0 13 11"><path d="M3 3.5 V0.5 H10 V3.5" fill="none" stroke="#222" stroke-width="1"/><path d="M3 8 H1 V3.5 H12 V8 H10" fill="none" stroke="#222" stroke-width="1.1"/><rect x="3" y="6" width="7" height="4.5" fill="none" stroke="#222" stroke-width="1"/></svg>
<svg class="a" style="left:509.0px;top:37.5px" width="11" height="2" viewBox="0 0 11 2"><circle cx="1" cy="1" r="0.9" fill="#222"/><circle cx="5.5" cy="1" r="0.9" fill="#222"/><circle cx="10" cy="1" r="0.9" fill="#222"/></svg>
<div class="a" style="left:145px;top:54px;width:239px;height:338px;background:#000"></div>
<svg class="a" style="left:0;top:0" width="530" height="413"><polygon fill="#fff100" transform="translate(-230,-29)" points="498.5,179.1 517.8,220.1 562.9,227.7 529.9,258.9 536.8,304.4 496.3,282.3 455.4,302.5 463.8,258 432.2,225.2 477.6,218.7"/></svg>
<svg class="a" style="left:508.0px;top:391.0px" width="13" height="13" viewBox="0 0 13 13"><path d="M1 12 L12 1" stroke="#222" stroke-width="0.9"/><path d="M1 8.5 V12 H4.5 M8.5 1 H12 V4.5" fill="none" stroke="#222" stroke-width="0.9"/></svg>
</div>
<script>
document.querySelectorAll('.t').forEach(function(e){var w=parseFloat(getComputedStyle(e).getPropertyValue('--w'));if(w){var r=e.getBoundingClientRect().width;if(r>0){e.style.transform='scaleX('+(w/r)+')';}}});
</script>
</body></html>
